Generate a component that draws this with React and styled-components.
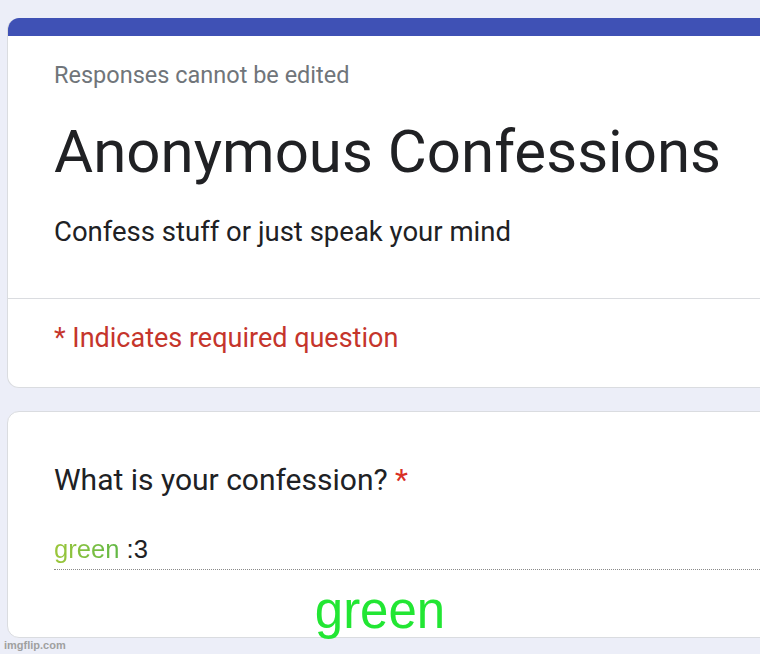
import styled, { createGlobalStyle } from "styled-components"

const Global = createGlobalStyle`
  html, body {
    margin: 0;
    padding: 0;
    background: #eceef8;
    overflow: hidden;
  }
`;

const Page = styled.div`
  position: relative;
  width: 760px;
  height: 654px;
  overflow: hidden;
  padding: 18px 0 0 7px;
  box-sizing: border-box;
  display: flex;
  flex-direction: column;
  gap: 23px;
  font-family: Roboto, "Liberation Sans", Arial, sans-serif;
`;

const Card = styled.div`
  width: 820px;
  flex-shrink: 0;
  background: #fff;
  border: 1px solid #dadce0;
  border-top: ${p => (p.$accent ? "none" : "1px solid #dadce0")};
  border-radius: 12px;
  overflow: hidden;
  box-sizing: border-box;
`;

const TopBar = styled.div`
  height: 18px;
  background: #3f51b5;
`;

const Section = styled.div`
  padding: ${p => p.$pad};
`;

const Notice = styled.div`
  font-size: 23.5px;
  line-height: 24px;
  color: #70757a;
`;

const Title = styled.h1`
  margin: 30px 0 0;
  font-size: 60px;
  line-height: 70px;
  font-weight: 400;
  color: #202124;
`;

const Subtitle = styled.div`
  margin-top: 30px;
  font-size: 27.5px;
  line-height: 30px;
  color: #202124;
`;

const Divider = styled.div`
  height: 1px;
  background: #dadce0;
`;

const Required = styled.div`
  font-size: 27px;
  line-height: 28px;
  color: #c5352b;
`;

const Question = styled.div`
  font-size: 30px;
  line-height: 32px;
  color: #202124;
`;

const Star = styled.span`
  color: #d93025;
`;

const Answer = styled.div`
  margin-top: 39px;
  padding-bottom: 6px;
  border-bottom: 1px dotted #8a8a8a;
  font-family: "Liberation Sans", Arial, sans-serif;
  font-size: 25.6px;
  line-height: 28px;
  color: #202124;
`;

const Green = styled.span`
  background: linear-gradient(90deg, #9cc63a, #62b846);
  -webkit-background-clip: text;
  background-clip: text;
  color: transparent;
`;

const Caption = styled.div`
  position: absolute;
  left: 0;
  right: 0;
  top: 583px;
  text-align: center;
  font-family: "Liberation Sans", Arial, sans-serif;
  font-size: 51px;
  line-height: 56px;
  color: #22e633;
`;

const Watermark = styled.div`
  position: absolute;
  left: 4px;
  top: 638px;
  font-family: "Liberation Sans", Arial, sans-serif;
  font-size: 11px;
  font-weight: 700;
  line-height: 14px;
  color: #a0a0a0;
`;

export default function App() {
  return (
    <>
      <Global />
      <Page>
        <Card $accent>
          <TopBar />
          <Section $pad="27px 0 51px 46px">
            <Notice>Responses cannot be edited</Notice>
            <Title>Anonymous Confessions</Title>
            <Subtitle>Confess stuff or just speak your mind</Subtitle>
          </Section>
          <Divider />
          <Section $pad="25px 0 35px 46px">
            <Required>* Indicates required question</Required>
          </Section>
        </Card>
        <Card>
          <Section $pad="52px 0 67px 46px">
            <Question>
              What is your confession? <Star>*</Star>
            </Question>
            <Answer>
              <Green>green</Green> :3
            </Answer>
          </Section>
        </Card>
        <Caption>green</Caption>
        <Watermark>imgflip.com</Watermark>
      </Page>
    </>
  )
}
